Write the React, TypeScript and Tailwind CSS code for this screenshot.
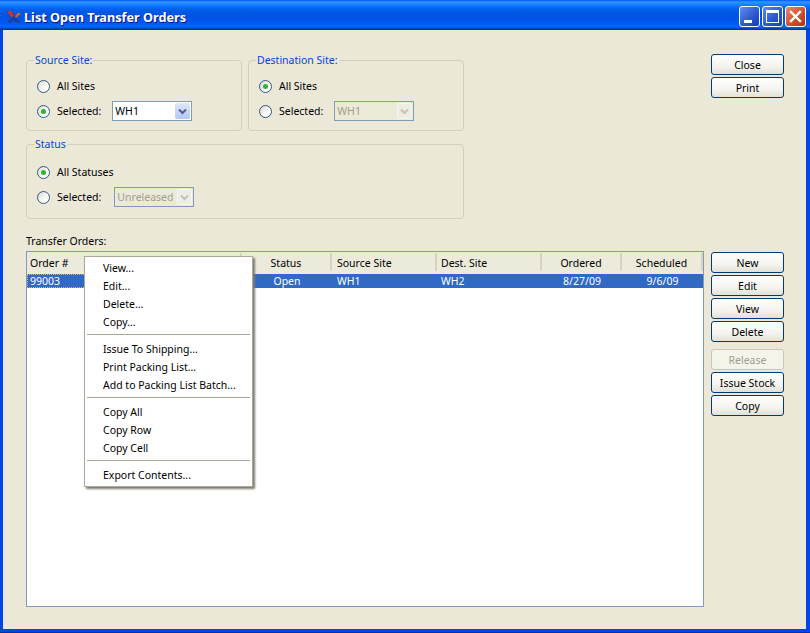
import React from "react";

const F = "font-['Noto_Sans','Liberation_Sans',sans-serif]";

function Radio({ on }: { on?: boolean }) {
  return (
    <span className="relative w-[13px] h-[13px] shrink-0 rounded-full border border-[#2f5a82] bg-[linear-gradient(135deg,#dcd9cd,#ffffff_70%)] flex items-center justify-center">
      {on && <span className="w-[5px] h-[5px] rounded-full bg-[#2cb42c]" />}
    </span>
  );
}

function Combo({ value, disabled }: { value: string; disabled?: boolean }) {
  return (
    <div className={`w-[80px] h-[20px] flex items-center justify-between border border-[#7f9db9] pl-[2px] pr-[1px] ${disabled ? "bg-[#ebe9d8] text-[#a19e8d]" : "bg-white text-black"}`}>
      <span>{value}</span>
      <span className={`w-[15px] h-[16px] rounded-[2px] flex items-center justify-center ${disabled ? "bg-[#eeede5] border border-[#f7f6f0]" : "bg-[linear-gradient(180deg,#dfe7fb,#b4c6f5)]"}`}>
        <svg width="9" height="7" viewBox="0 0 9 7">
          <path d="M1 1.5 L4.5 5 L8 1.5" fill="none" stroke={disabled ? "#c3c2b5" : "#4d6185"} strokeWidth="2" />
        </svg>
      </span>
    </div>
  );
}

function Btn({ children, disabled, className = "" }: { children: string; disabled?: boolean; className?: string }) {
  return (
    <button className={`w-[73px] h-[21px] rounded-[3px] border flex items-center justify-center leading-none pt-[1px] ${disabled ? "border-[#c9c7ba] bg-[#f5f4ea] text-[#a19e8d]" : "border-[#003c74] bg-[linear-gradient(180deg,#ffffff,#f4f3ee_60%,#e3e1d6)] text-black"} ${className}`}>
      {children}
    </button>
  );
}

function Group({ title, className = "", children }: { title: string; className?: string; children: React.ReactNode }) {
  return (
    <fieldset className={`border border-[#d0d0bf] rounded-[4px] pl-[10px] pr-[9px] ${className}`}>
      <legend className="-ml-[3px] px-[1px] h-[13px] leading-[12px] text-[#0046d5]">{title}</legend>
      {children}
    </fieldset>
  );
}

function RadioRow({ on, label, className = "", children }: { on?: boolean; label: string; className?: string; children?: React.ReactNode }) {
  return (
    <div className={`h-[20px] flex items-center ${className}`}>
      <Radio on={on} />
      <span className="ml-[7px]">{label}</span>
      {children}
    </div>
  );
}

const MENU: (string | null)[] = [
  "View...", "Edit...", "Delete...", "Copy...", null,
  "Issue To Shipping...", "Print Packing List...", "Add to Packing List Batch...", null,
  "Copy All", "Copy Row", "Copy Cell", null,
  "Export Contents...",
];

function Menu() {
  return (
    <div className="absolute left-[84px] top-[256px] w-[169px] h-[231px] bg-white border border-[#aca899] py-[2px] shadow-[2px_2px_2px_#7d7b70]">
      {MENU.map((m, i) =>
        m === null ? (
          <div key={i} className="h-[9px] pt-[3px] px-[2px]"><div className="h-px bg-[#aca899]" /></div>
        ) : (
          <div key={i} className="h-[18px] leading-[18px] pl-[18px] text-black">{m}</div>
        )
      )}
    </div>
  );
}

const COLS = [
  { w: "w-[215px]", h: "Order #", c: "99003", a: "justify-start pl-[3px]", r: "justify-start pl-[2px]" },
  { w: "w-[90px]", h: "Status", c: "Open", a: "justify-center", r: "justify-center" },
  { w: "w-[105px]", h: "Source Site", c: "WH1", a: "justify-start pl-[5px]", r: "justify-start pl-[5px]" },
  { w: "w-[105px]", h: "Dest. Site", c: "WH2", a: "justify-start pl-[4px]", r: "justify-start pl-[4px]" },
  { w: "w-[80px]", h: "Ordered", c: "8/27/09", a: "justify-center", r: "justify-center" },
  { w: "w-[81px]", h: "Scheduled", c: "9/6/09", a: "justify-center", r: "justify-center" },
];

export default function App() {
  return (
    <div className={`${F} relative w-[810px] h-[633px] overflow-hidden text-[10.5px] leading-[14px] bg-[#0046e8] flex flex-col text-black border-b border-b-[#0030b0]`}>
      <div className="h-[30px] shrink-0 flex items-center pl-[6px] pr-[4px] bg-[linear-gradient(180deg,#0058ee_0,#3593ff_2px,#288eff_3px,#127dff_5px,#036ffc_7px,#0262ee_9px,#0057e5_12px,#0054e3_16px,#0055eb_21px,#005bf5_24px,#026afe_26px,#0062ef_27px,#0052d6_28px,#0040ab_29px,#003092_30px)]">
        <svg width="16" height="14" viewBox="0 0 16 14" className="shrink-0 mt-[3px]">
          <path d="M1 1 L5 1 L8 5 L6 8 Z" fill="#d8321c" />
          <path d="M6 8 L8 5 L15 13 L10 13 Z" fill="#1f3f9e" />
          <path d="M1 13 L6 7 L8 9 L5 13 Z" fill="#1f3f9e" />
          <path d="M9 6 L12 3 L15 3 L10 8 Z" fill="#e0661c" />
        </svg>
        <span className="ml-[2px] mt-[4px] text-white font-bold text-[12.7px] leading-none [text-shadow:1px_1px_#0f1089]">List Open Transfer Orders</span>
        <div className="ml-auto flex gap-[2px] mt-[2px]">
          <div className="w-[21px] h-[21px] rounded-[3px] border border-white bg-[linear-gradient(135deg,#5f8df0,#2a55d0_60%,#1a3fb8)] flex items-end pl-[4px] pb-[3px]">
            <div className="w-[8px] h-[3px] bg-white" />
          </div>
          <div className="w-[21px] h-[21px] rounded-[3px] border border-white bg-[linear-gradient(135deg,#5f8df0,#2a55d0_60%,#1a3fb8)] flex items-center justify-center">
            <div className="w-[13px] h-[13px] border border-white border-t-[3px]" />
          </div>
          <div className="w-[21px] h-[21px] rounded-[3px] border border-white bg-[linear-gradient(135deg,#e98a6c,#d0502f_55%,#b0341a)] flex items-center justify-center">
            <svg width="13" height="13" viewBox="0 0 13 13">
              <path d="M2 2 L11 11 M11 2 L2 11" stroke="#fff" strokeWidth="2.4" strokeLinecap="square" />
            </svg>
          </div>
        </div>
      </div>

      <div className="flex-1 ml-[3px] mr-[4px] mb-[3px] bg-[#ebe8d8] pl-[23px] pt-[24px] flex gap-[7px]">
        <div className="w-[678px] flex flex-col">
          <div className="flex gap-[6px]">
            <Group title="Source Site:" className="w-[216px] h-[77px]">
              <RadioRow label="All Sites" className="mt-[9px]" />
              <RadioRow on label="Selected:" className="mt-[5px]">
                <div className="ml-[11px]"><Combo value="WH1" /></div>
              </RadioRow>
            </Group>
            <Group title="Destination Site:" className="w-[216px] h-[77px]">
              <RadioRow on label="All Sites" className="mt-[9px]" />
              <RadioRow label="Selected:" className="mt-[5px]">
                <div className="ml-[11px]"><Combo value="WH1" disabled /></div>
              </RadioRow>
            </Group>
          </div>
          <Group title="Status" className="w-[438px] h-[81px] mt-[7px]">
            <RadioRow on label="All Statuses" className="mt-[11px]" />
            <RadioRow label="Selected:" className="mt-[5px]">
              <div className="ml-[13px]"><Combo value="Unreleased" disabled /></div>
            </RadioRow>
          </Group>
          <div className="mt-[15px] h-[17px]">Transfer Orders:</div>
          <div className="h-[356px] border border-[#7f9db9] bg-white flex flex-col">
            <div className="h-[22px] flex bg-[#ebeadb]">
              {COLS.map((c) => (
                <div key={c.h} className={`${c.w} flex items-center ${c.a} border-r-2 border-r-[#d6d3c4] mt-[1px] mb-[3px] pt-[1px]`}>{c.h}</div>
              ))}
            </div>
            <div className="h-[14px] flex bg-[#316ac5] text-white">
              {COLS.map((c, i) => (
                <div key={c.h} className={`${c.w} flex items-center ${c.r} ${i === 0 ? "border border-dotted border-[#d9b36a]" : ""}`}>{c.c}</div>
              ))}
            </div>
          </div>
        </div>

        <div className="w-[73px] flex flex-col">
          <Btn>Close</Btn>
          <Btn className="mt-[2px]">Print</Btn>
          <Btn className="mt-[154px]">New</Btn>
          <Btn className="mt-[2px]">Edit</Btn>
          <Btn className="mt-[2px]">View</Btn>
          <Btn className="mt-[2px]">Delete</Btn>
          <Btn disabled className="mt-[7px]">Release</Btn>
          <Btn className="mt-[2px]">Issue Stock</Btn>
          <Btn className="mt-[2px]">Copy</Btn>
        </div>
      </div>
      <Menu />
    </div>
  );
}
